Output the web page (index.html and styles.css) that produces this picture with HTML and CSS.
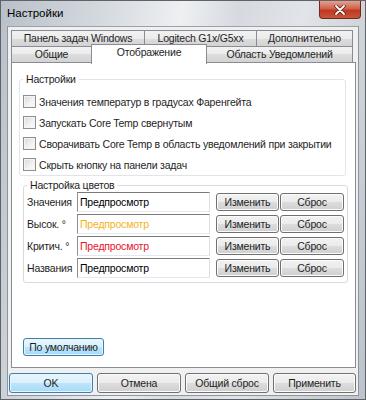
FILE: index.html
```html
<!DOCTYPE html>
<html lang="ru">
<head>
  <meta charset="UTF-8">
  <title>Настройки</title>
  <link rel="stylesheet" href="styles.css">
</head>
<body>
  <div class="window">
    <div class="titlebar">
      <span class="title">Настройки</span>
      <div class="close">
        <svg width="12" height="10" viewBox="0 0 12 10">
          <path d="M2 1 L10 9 M10 1 L2 9" stroke="#5a1d12" stroke-width="3.4" stroke-linecap="round"/>
          <path d="M2 1 L10 9 M10 1 L2 9" stroke="#ffffff" stroke-width="1.8" stroke-linecap="round"/>
        </svg>
      </div>
    </div>

    <div class="client">
      <div class="tabs">
        <div class="tab-row">
          <div class="tab w133">Панель задач Windows</div>
          <div class="tab w112">Logitech G1x/G5xx</div>
          <div class="tab w97">Дополнительно</div>
        </div>
        <div class="tab-row">
          <div class="tab w80">Общие</div>
          <div class="tab w115 active">Отображение</div>
          <div class="tab w147">Область Уведомлений</div>
        </div>
      </div>

      <div class="panel">
        <fieldset class="group main">
          <legend>Настройки</legend>
          <div class="check"><span class="box"></span>Значения температур в градусах Фаренгейта</div>
          <div class="check"><span class="box"></span>Запускать Core Temp свернутым</div>
          <div class="check"><span class="box"></span>Сворачивать Core Temp в область уведомлений при закрытии</div>
          <div class="check"><span class="box"></span>Скрыть кнопку на панели задач</div>
        </fieldset>

        <fieldset class="group colors">
          <legend>Настройка цветов</legend>
          <div class="color-row">
            <span class="label">Значения</span>
            <span class="preview">Предпросмотр</span>
            <button class="btn change">Изменить</button>
            <button class="btn reset">Сброс</button>
          </div>
          <div class="color-row">
            <span class="label">Высок. °</span>
            <span class="preview high">Предпросмотр</span>
            <button class="btn change">Изменить</button>
            <button class="btn reset">Сброс</button>
          </div>
          <div class="color-row">
            <span class="label">Критич. °</span>
            <span class="preview crit">Предпросмотр</span>
            <button class="btn change">Изменить</button>
            <button class="btn reset">Сброс</button>
          </div>
          <div class="color-row">
            <span class="label">Названия</span>
            <span class="preview">Предпросмотр</span>
            <button class="btn change">Изменить</button>
            <button class="btn reset">Сброс</button>
          </div>
        </fieldset>

        <button class="btn focus defaults">По умолчанию</button>
      </div>

      <div class="footer">
        <button class="btn focus ok">OK</button>
        <button class="btn cancel">Отмена</button>
        <button class="btn all">Общий сброс</button>
        <button class="btn apply">Применить</button>
      </div>
    </div>
  </div>
</body>
</html>
```

FILE: styles.css
```css
body {
  margin: 0;
  font-family: "Liberation Sans", Arial, sans-serif;
  font-size: 10.5px;
  letter-spacing: -0.2px;
  color: #000;
}

.window {
  width: 366px;
  height: 400px;
  box-sizing: border-box;
  border: 1px solid #5f6367;
  background: linear-gradient(100deg, #b9c0c8 0%, #d6dbe0 25%, #eef0f2 42%, #d6dae0 55%, #e1e4e8 70%, #bcc3ca 100%);
  display: flex;
  flex-direction: column;
}

/* title bar */
.titlebar {
  height: 26px;
  display: flex;
  align-items: flex-start;
}

.title {
  font-size: 11.5px;
  letter-spacing: 0;
  margin: 6px 0 0 6px;
}

.close {
  margin-left: auto;
  margin-right: 4px;
  width: 42px;
  height: 18px;
  box-sizing: border-box;
  border: 1px solid #6d2a1e;
  border-top: none;
  border-radius: 0 0 4px 4px;
  background: linear-gradient(#e3a08f 0%, #d0614b 45%, #bd3a22 55%, #c9553a 100%);
  display: flex;
  align-items: center;
  justify-content: center;
}

/* client area */
.client {
  flex: 1;
  margin: 0 6px 3px 6px;
  padding: 3px 2px 2px 3px;
  background: #f0f0f0;
  border: 1px solid #8d949b;
  border-top-color: #9aa1a8;
  display: flex;
  flex-direction: column;
  box-sizing: border-box;
}

.tabs {
  height: 32px;
  display: flex;
  flex-direction: column;
}

.tab-row {
  display: flex;
  height: 16px;
}

.tab {
  box-sizing: border-box;
  height: 17px;
  margin-right: -1px;
  border: 1px solid #898c95;
  background: linear-gradient(#f2f2f2 0%, #ebebeb 50%, #dddddd 50%, #d3d3d3 100%);
  text-align: center;
  line-height: 15px;
  color: #1e1e1e;
}

.tab.active {
  position: relative;
  z-index: 2;
  height: 20px;
  margin-top: -2px;
  border-bottom: none;
  background: #fff;
  line-height: 14px;
}

.w133 { width: 134px; }
.w112 { width: 113px; }
.w97 { width: 97px; }
.w80 { width: 81px; }
.w115 { width: 116px; }
.w147 { width: 147px; }

/* page */
.panel {
  height: 306px;
  box-sizing: border-box;
  background: #fff;
  border: 1px solid #898c95;
  padding: 10px 9px 0 7px;
  display: flex;
  flex-direction: column;
  align-items: flex-start;
}

.group {
  margin: 0;
  border: 1px solid #e2e5e8;
  border-radius: 3px;
  width: 100%;
  box-sizing: border-box;
}

.group legend {
  padding: 0 3px;
  line-height: 13px;
  color: #1e1e1e;
}

.main {
  padding: 9px 0 4px 3px;
}

.check {
  display: flex;
  align-items: center;
  height: 13px;
  margin-bottom: 8px;
  white-space: nowrap;
  color: #1e1e1e;
}

.check:last-child {
  margin-bottom: 0;
}

.box {
  flex: none;
  width: 13px;
  height: 13px;
  box-sizing: border-box;
  border: 1px solid #8e8f8f;
  background: linear-gradient(135deg, #d6d8da 0%, #f3f3f3 60%, #fcfcfc 100%);
  box-shadow: inset 0 0 0 1px #f4f4f4;
  margin-right: 3px;
}

.colors {
  margin: 3px 0 0 4px;
  width: 325px;
  padding: 0 3px 2px 3px;
  border-color: #d5dbe0;
}

.color-row {
  display: flex;
  align-items: center;
  height: 20px;
  margin-bottom: 2px;
  white-space: nowrap;
  color: #1e1e1e;
}

.label {
  width: 50px;
  flex: none;
}

.preview {
  flex: none;
  width: 133px;
  height: 20px;
  box-sizing: border-box;
  border: 1px solid #abadb3;
  border-color: #7a7a7a #dcdfe4 #e3e9ef #8f8f8f;
  padding-left: 2px;
  line-height: 18px;
  color: #000;
  margin-right: 6px;
}

.preview.high { color: #f4b21e; }
.preview.crit { color: #e8122e; }

/* buttons */
.btn {
  font: inherit;
  letter-spacing: -0.2px;
  color: #1e1e1e;
  height: 18px;
  box-sizing: border-box;
  border: 1px solid #707070;
  border-radius: 3px;
  background: linear-gradient(#f2f2f2 0%, #ebebeb 50%, #dddddd 50%, #cfcfcf 100%);
  box-shadow: inset 0 0 0 1px #fbfbfb;
  padding: 0;
}

.btn.focus {
  border-color: #3c7fb1;
  background: linear-gradient(#eaf6fd 0%, #d9f0fc 50%, #bee6fd 50%, #a7d9f5 100%);
  box-shadow: inset 0 0 0 1px #e6f4fc;
}

.change {
  width: 63px;
  margin-right: 1px;
}

.reset {
  width: 64px;
}

.defaults {
  width: 81px;
  margin: 55px 0 0 4px;
}

.footer {
  display: flex;
  margin: 5px 0 0 -2px;
  gap: 4px;
}

.footer .btn {
  width: 84px;
  height: 20px;
}

.footer .apply {
  width: 83px;
}
```
